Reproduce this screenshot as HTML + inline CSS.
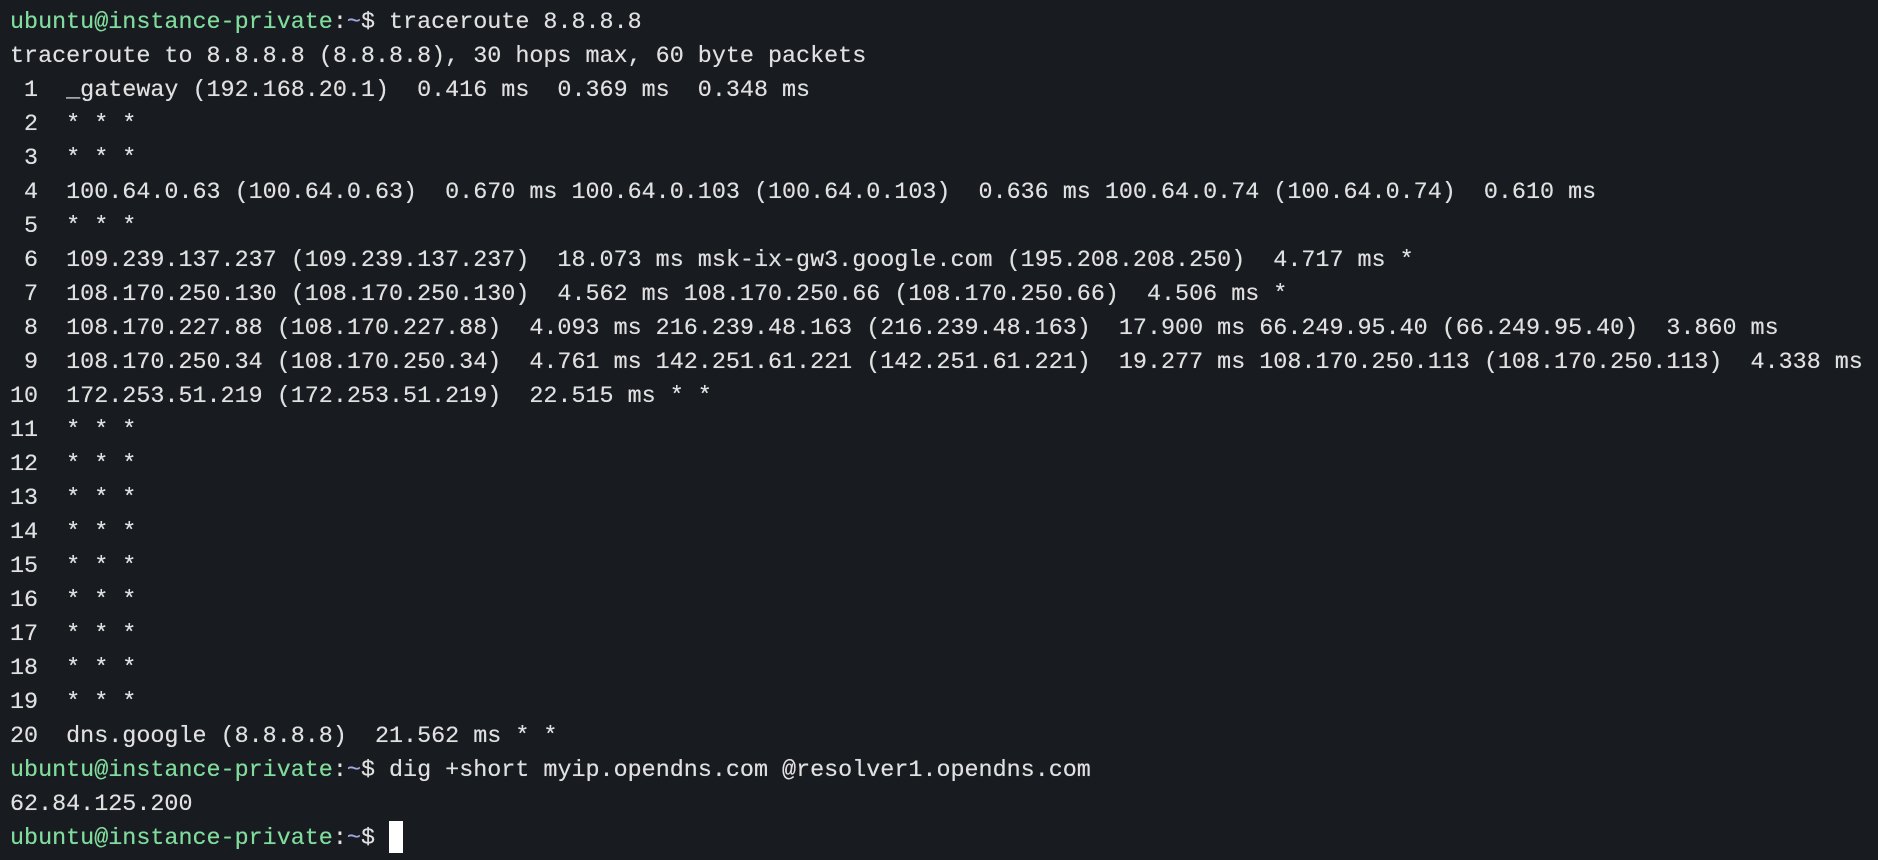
<!DOCTYPE html>
<html><head><meta charset="utf-8"><style>
html,body{margin:0;padding:0;background:#181b20;width:1878px;height:860px;overflow:hidden}
pre{margin:0;padding:6px 0 0 10px;font-family:"Liberation Mono","DejaVu Sans Mono",monospace;font-size:23.4px;line-height:34px;color:#e0e0e0;white-space:pre;text-shadow:0 0 0.4px #e0e0e0}
.g{color:#80dc9c;text-shadow:0 0 0.4px #80dc9c}.b{color:#a0a8ea}
.c{display:inline-block;width:14px;height:32px;background:#fff;vertical-align:top;margin-top:-1px}
</style></head><body><pre><span class="g">ubuntu@instance-private</span>:<span class="b">~</span>$ traceroute 8.8.8.8
traceroute to 8.8.8.8 (8.8.8.8), 30 hops max, 60 byte packets
 1  _gateway (192.168.20.1)  0.416 ms  0.369 ms  0.348 ms
 2  * * *
 3  * * *
 4  100.64.0.63 (100.64.0.63)  0.670 ms 100.64.0.103 (100.64.0.103)  0.636 ms 100.64.0.74 (100.64.0.74)  0.610 ms
 5  * * *
 6  109.239.137.237 (109.239.137.237)  18.073 ms msk-ix-gw3.google.com (195.208.208.250)  4.717 ms *
 7  108.170.250.130 (108.170.250.130)  4.562 ms 108.170.250.66 (108.170.250.66)  4.506 ms *
 8  108.170.227.88 (108.170.227.88)  4.093 ms 216.239.48.163 (216.239.48.163)  17.900 ms 66.249.95.40 (66.249.95.40)  3.860 ms
 9  108.170.250.34 (108.170.250.34)  4.761 ms 142.251.61.221 (142.251.61.221)  19.277 ms 108.170.250.113 (108.170.250.113)  4.338 ms
10  172.253.51.219 (172.253.51.219)  22.515 ms * *
11  * * *
12  * * *
13  * * *
14  * * *
15  * * *
16  * * *
17  * * *
18  * * *
19  * * *
20  dns.google (8.8.8.8)  21.562 ms * *
<span class="g">ubuntu@instance-private</span>:<span class="b">~</span>$ dig +short myip.opendns.com @resolver1.opendns.com
62.84.125.200
<span class="g">ubuntu@instance-private</span>:<span class="b">~</span>$ <span class="c"></span></pre></body></html>
